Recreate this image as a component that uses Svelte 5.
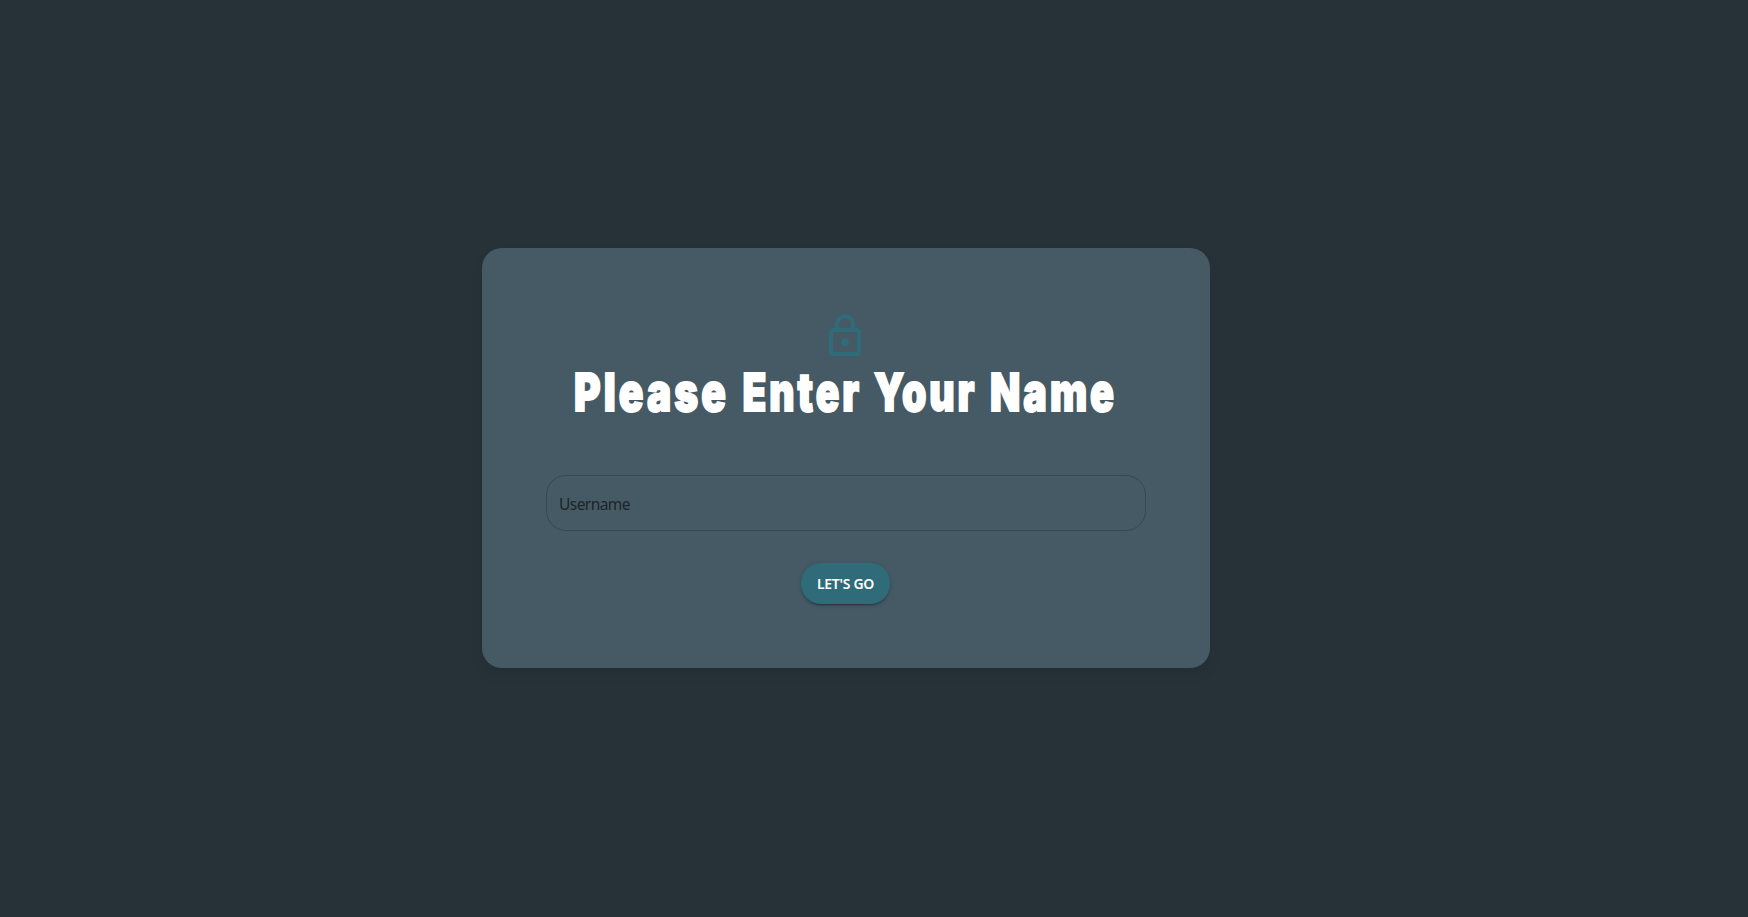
<script>
  let username = $state('');
  const words = [
    { text: 'Please', x: 28, width: 155 },
    { text: 'Enter', x: 196.500, width: 119.500 },
    { text: 'Your', x: 328, width: 103.500 },
    { text: 'Name', x: 444, width: 127 }
  ];
</script>

<main>
  <form class="card" onsubmit={(e) => e.preventDefault()}>
    <svg class="lock" viewBox="0 0 24 24" aria-hidden="true">
      <rect x="5" y="9" width="14" height="12" rx="1" />
      <path d="M8 9V6a4 4 0 0 1 8 0v3" />
      <circle cx="12" cy="15" r="2" />
    </svg>
    <h1>
      <svg class="title" viewBox="0 0 600 72">
        <text y="51">
          {#each words as w}
            <tspan x={w.x} textLength={w.width} lengthAdjust="spacingAndGlyphs">{w.text}</tspan>
          {/each}
        </text>
      </svg>
    </h1>
    <input type="text" placeholder="Username" bind:value={username} />
    <button type="submit">LET'S GO</button>
  </form>
</main>

<style>
  :global(body) {
    margin: 0;
    background: #263238;
  }
  main {
    box-sizing: border-box;
    height: 917px;
    padding: 0 56px 1px 0;
    display: flex;
    align-items: center;
    justify-content: center;
    background: #263238;
  }
  .card {
    box-sizing: border-box;
    width: 728px;
    height: 420px;
    padding: 64px;
    display: flex;
    flex-direction: column;
    align-items: center;
    border-radius: 20px;
    background: #455a64;
    box-shadow: 0 8px 14px rgba(0, 0, 0, 0.06);
  }
  .lock {
    width: 48px;
    height: 48px;
    flex: none;
    margin-right: 2px;
    fill: none;
    stroke: #2f6b78;
    stroke-width: 2;
  }
  .lock circle {
    fill: #2f6b78;
    stroke: none;
  }
  h1 {
    width: 600px;
    height: 72px;
    margin: 0 0 43px;
    flex: none;
  }
  .title {
    display: block;
    width: 600px;
    height: 72px;
    overflow: visible;
  }
  .title text {
    font-family: Inter, sans-serif;
    font-size: 52.500px;
    font-weight: 900;
    letter-spacing: 4px;
    fill: #fff;
    stroke: #fff;
    stroke-width: 1.900px;
  }
  input {
    box-sizing: border-box;
    width: 600px;
    height: 56px;
    flex: none;
    padding: 1px 12px 0;
    border: 1px solid #364850;
    border-radius: 20px;
    outline: none;
    background: transparent;
    color: #1c2428;
    font: 15.500px "Noto Sans", sans-serif;
    letter-spacing: -0.550px;
  }
  input::placeholder {
    color: #1c2428;
    opacity: 1;
  }
  button {
    width: 89px;
    height: 41px;
    flex: none;
    margin: 32px 1px 0 0;
    padding: 0 0 1px;
    border: 0;
    border-radius: 20px;
    background: #2f6b78;
    color: #fff;
    font: 600 14px "Noto Sans", sans-serif;
    letter-spacing: -0.300px;
    white-space: nowrap;
    box-shadow: 0 3px 1px -2px rgba(0, 0, 0, 0.2), 0 2px 2px rgba(0, 0, 0, 0.14), 0 1px 5px rgba(0, 0, 0, 0.12);
  }
</style>
